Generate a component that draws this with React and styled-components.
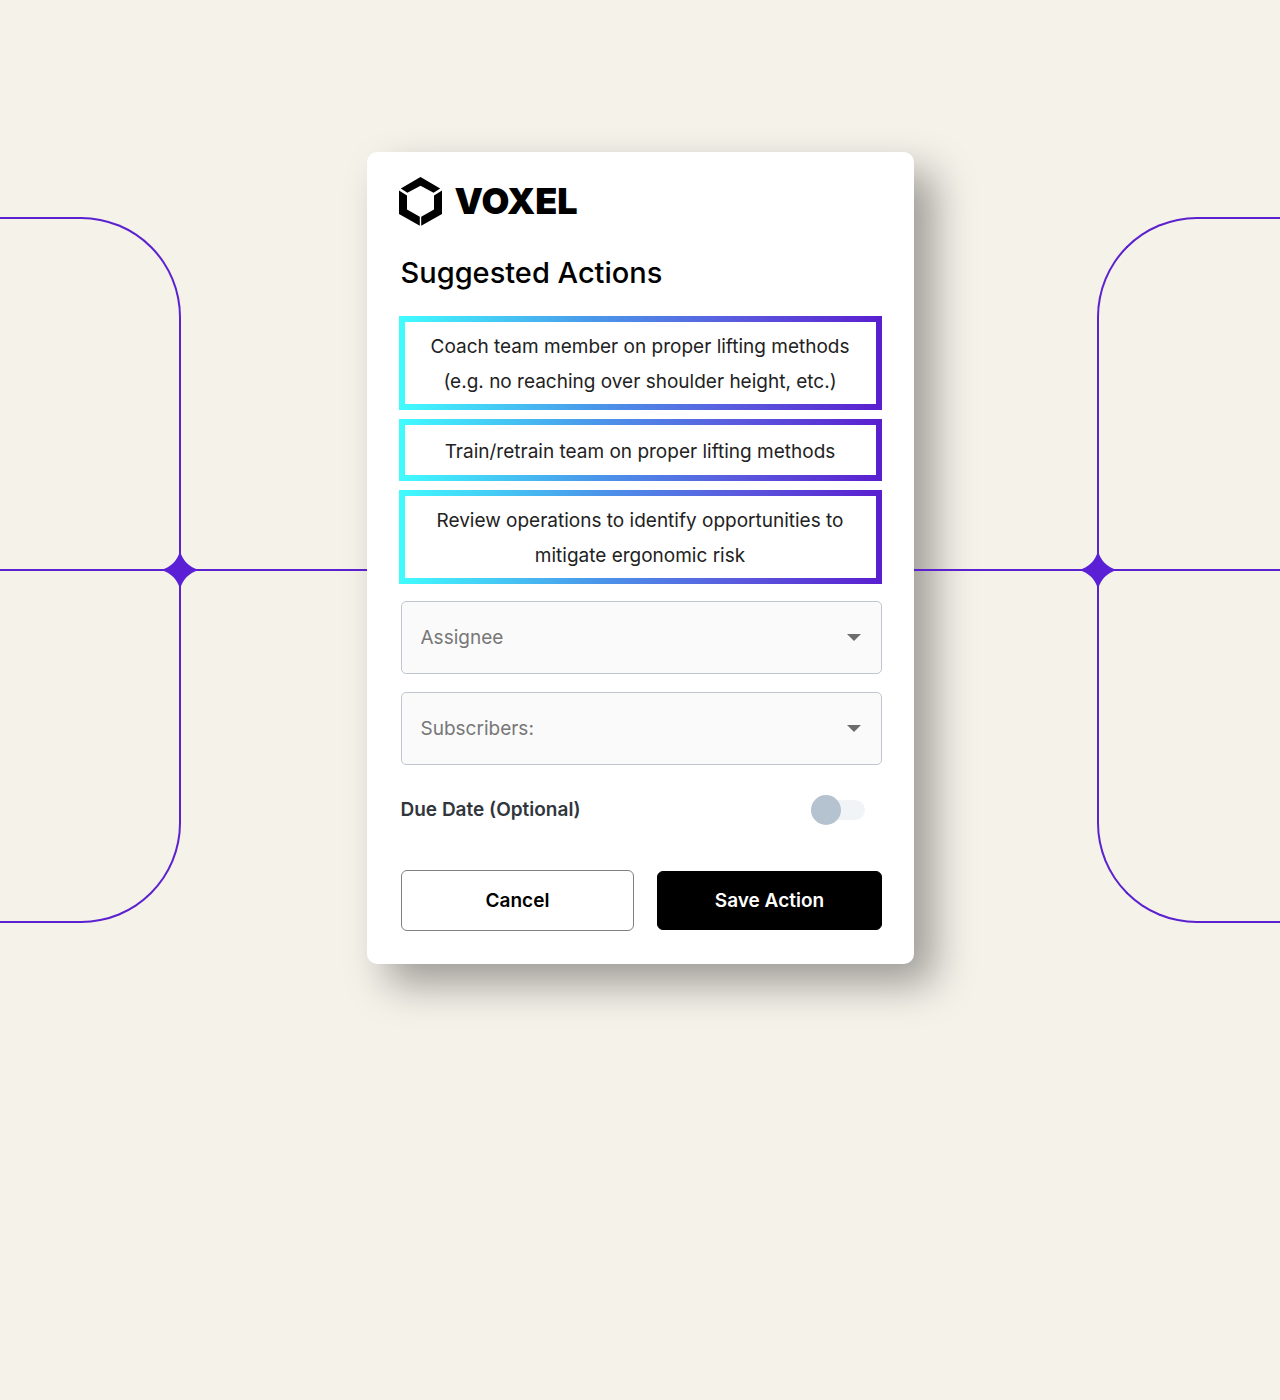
import React, { useCallback, useState } from 'react';
import styled, { createGlobalStyle } from 'styled-components';

const SUGGESTIONS = [
  ['Coach team member on proper lifting methods', '(e.g. no reaching over shoulder height, etc.)'],
  ['Train/retrain team on proper lifting methods'],
  ['Review operations to identify opportunities to', 'mitigate ergonomic risk'],
];

const GlobalStyle = createGlobalStyle`
  * { box-sizing: border-box; }

  body {
    margin: 0;
    background: #f5f2ea;
    font-family: Inter, "Liberation Sans", sans-serif;
    color: #000;
  }

  button, select, input { font: inherit; }
`;

const Logo = () => (
  <Brand>
    <svg width="43" height="49" viewBox="0 0 43 49" aria-hidden="true">
      <path d="M21.5 0 L41.2 11.4 L34.6 15.8 L21.5 8.8 L8.4 15.8 L1.800 11.4 Z" />
      <path d="M0 13.6 L8 18.4 V32.4 L20.8 39.8 V48.8 L0 37 Z" />
      <path d="M43 13.6 L35 18.4 V32.4 L22.2 39.8 V48.8 L43 37 Z" />
    </svg>
    <Wordmark>VOXEL</Wordmark>
  </Brand>
);

const Connector = ({ side }) => (
  <Side $side={side}>
    <Loop $side={side} />
    <Wire />
    <Star $side={side} viewBox="0 0 36 36" aria-hidden="true">
      <path d="M18 0 Q22 14 36 18 Q22 22 18 36 Q14 22 0 18 Q14 14 18 0 Z" />
    </Star>
  </Side>
);

const SelectField = ({ label }) => (
  <Field>
    <select aria-label={label} defaultValue="">
      <option value="">{label}</option>
    </select>
    <svg width="14" height="7" viewBox="0 0 14 7" aria-hidden="true">
      <path d="M0 0 H14 L7 7 Z" />
    </svg>
  </Field>
);

const App = () => {
  const [dueDate, setDueDate] = useState(false);

  const onToggle = useCallback(e => {
    setDueDate(e.target.checked);
  }, []);

  return (
    <>
      <GlobalStyle />
      <Stage>
        <Connector side="left" />
        <Card>
          <Logo />
          <Title>Suggested Actions</Title>

          <SuggestionList>
            {SUGGESTIONS.map(lines => (
              <Suggestion key={lines[0]} type="button">
                {lines.map(line => <span key={line}>{line}</span>)}
              </Suggestion>
            ))}
          </SuggestionList>

          <Form onSubmit={e => e.preventDefault()}>
            <SelectField label="Assignee" />
            <SelectField label="Subscribers:" />

            <ToggleRow>
              <label htmlFor="due-date">Due Date (Optional)</label>
              <Toggle id="due-date" type="checkbox" checked={dueDate} onChange={onToggle} />
            </ToggleRow>

            <Buttons>
              <Button type="button">Cancel</Button>
              <Button type="submit" $primary>Save Action</Button>
            </Buttons>
          </Form>
        </Card>
        <Connector side="right" />
      </Stage>
    </>
  );
};

export default App;

const Stage = styled.main`
  display: grid;
  grid-template-columns: minmax(0, 1fr) minmax(0, 547px) minmax(0, 1fr);
  min-height: 100vh;
  padding: 152px 0;
  align-content: start;
  overflow: hidden;
`;

const Card = styled.section`
  padding: 25px 32px 33px;
  border-radius: 10px;
  background: #fff;
  box-shadow: 20px 20px 40px rgba(0, 0, 0, .36);
`;

/* 카드 양옆 장식 라인 */
const Side = styled.div`
  position: relative;
  display: flex;
  flex-direction: ${({ $side }) => ($side === 'left' ? 'row' : 'row-reverse')};
  margin: 65px 0 41px;
`;

const Loop = styled.div`
  flex: 1;
  margin: ${({ $side }) => ($side === 'left' ? '0 186px 0 0' : '0 0 0 183px')};
  border: 2px solid #5b21cf;
  border-width: ${({ $side }) => ($side === 'left' ? '2px 2px 2px 0' : '2px 0 2px 2px')};
  border-radius: ${({ $side }) => ($side === 'left' ? '0 100px 100px 0' : '100px 0 0 100px')};
`;

const Wire = styled.div`
  position: absolute;
  top: 50%;
  left: 0;
  right: 0;
  height: 2px;
  margin-top: -1px;
  background: #5b21cf;
`;

const Star = styled.svg`
  position: absolute;
  top: 50%;
  ${({ $side }) => ($side === 'left' ? 'right: 168px' : 'left: 165px')};
  width: 38px;
  height: 38px;
  margin-top: -19px;
  fill: #5b1fd6;
`;

const Brand = styled.div`
  display: flex;
  align-items: center;
  gap: 13px;
  height: 49px;

  svg { flex: none; }
`;

const Wordmark = styled.span`
  font-family: Inter, sans-serif;
  font-size: 36px;
  font-weight: 900;
  line-height: 49px;
`;

const Title = styled.h1`
  margin: 28px 2px 25px;
  font-size: 29px;
  font-weight: 500;
  line-height: 37px;
`;

const SuggestionList = styled.div`
  display: flex;
  flex-direction: column;
  gap: 9px;
`;

const Suggestion = styled.button`
  min-height: 62px;
  padding: 7px 6px 5px;
  border: 6px solid transparent;
  background:
    linear-gradient(#fff, #fff) padding-box,
    linear-gradient(90deg, #40fcff, #4a98ea 40%, #5a5ade 70%, #5a1ecf) border-box;
  color: #222;
  font-size: 19px;
  line-height: 35px;
  text-align: center;
  cursor: pointer;

  span { display: block; }
`;

const Form = styled.form`
  display: flex;
  flex-direction: column;
  gap: 18px;
  padding: 17px 0 0 2px;
`;

const Field = styled.div`
  position: relative;

  select {
    display: block;
    width: 100%;
    height: 73px;
    padding: 0 48px 0 19px;
    border: 1px solid #c0c5cf;
    border-radius: 5px;
    background: #fafafa;
    color: #777;
    font-size: 19px;
    appearance: none;
  }

  svg {
    position: absolute;
    top: 33px;
    right: 21px;
    fill: #6c6c6c;
    pointer-events: none;
  }
`;

const ToggleRow = styled.div`
  display: flex;
  align-items: center;
  justify-content: space-between;
  padding: 12px 17px 27px 0;
  color: #30363c;
  font-size: 19px;
  font-weight: 600;
  line-height: 30px;
`;

const Toggle = styled.input`
  display: flex;
  align-items: center;
  width: 54px;
  height: 20px;
  margin: 0;
  border-radius: 10px;
  background: #f1f4f6;
  appearance: none;
  cursor: pointer;

  &::before {
    content: '';
    flex: none;
    width: 30px;
    height: 30px;
    border-radius: 50%;
    background: #b5c2cf;
  }

  &:checked { justify-content: flex-end; }
`;

const Buttons = styled.div`
  display: flex;
  align-items: center;
  gap: 23px;
`;

const Button = styled.button`
  flex: ${({ $primary }) => ($primary ? '224 1 0' : '234 1 0')};
  height: ${({ $primary }) => ($primary ? '59px' : '61px')};
  padding: 0;
  border: 1px solid ${({ $primary }) => ($primary ? '#000' : '#808080')};
  border-radius: 6px;
  background: ${({ $primary }) => ($primary ? '#000' : '#fff')};
  color: ${({ $primary }) => ($primary ? '#fff' : '#000')};
  font-size: 19px;
  font-weight: 600;
  cursor: pointer;
`;
